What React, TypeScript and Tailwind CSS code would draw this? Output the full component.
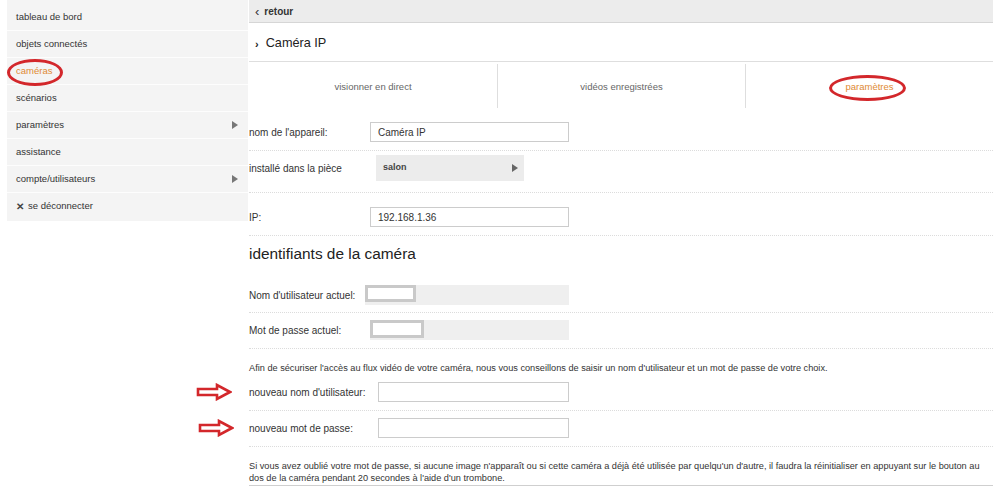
import React from "react";

const menu = [
  { label: "tableau de bord" },
  { label: "objets connectés" },
  { label: "caméras", active: true },
  { label: "scénarios" },
  { label: "paramètres", sub: true },
  { label: "assistance" },
  { label: "compte/utilisateurs", sub: true },
];

const tabs = ["visionner en direct", "vidéos enregistrées", "paramètres"];

// petit triangle plein des entrées de menu
const Caret: React.FC<{ className?: string }> = ({ className }) => (
  <svg width="6" height="8" viewBox="0 0 6 8" className={className}>
    <path d="M0 0 L6 4 L0 8 Z" fill="currentColor" />
  </svg>
);

// flèche rouge d'annotation
const RedArrow: React.FC<{ className?: string }> = ({ className }) => (
  <svg width="36" height="18" viewBox="0 0 36 18" className={className}>
    <path
      d="M2 6 H21 V2 L34 9 L21 16 V12 H2 Z"
      fill="#fff"
      stroke="#d3272b"
      strokeWidth="2.6"
      strokeLinejoin="miter"
    />
  </svg>
);

const Row: React.FC<React.PropsWithChildren<{ className?: string }>> = ({
  children,
  className = "",
}) => (
  <div
    className={`flex items-center border-b border-dotted border-[#dcdcdc] text-[10px] ${className}`}
  >
    {children}
  </div>
);

const App: React.FC = () => {
  return (
    <div
      className="relative flex w-[998px] h-[487px] overflow-hidden bg-white text-[#333]"
      style={{ fontFamily: '"Liberation Sans", Arial, sans-serif' }}
    >
      {/* menu latéral */}
      <div className="ml-[7px] w-[241px] flex-none self-start bg-[#f4f4f4] pt-[4px] pb-[1px] text-[9.5px]">
        {menu.map((item) => (
          <div
            key={item.label}
            className="flex h-[27px] items-center justify-between border-b border-[#fdfdfd] pl-[9px] pr-[10px]"
          >
            <span className={item.active ? "text-[#e08a34]" : ""}>
              {item.label}
            </span>
            {item.sub ? <Caret className="text-[#777]" /> : null}
          </div>
        ))}
        <div className="flex h-[27px] items-center pl-[9px]">
          <span className="mr-[4px] text-[10px] font-bold text-[#444]">✕</span>
          se déconnecter
        </div>
      </div>

      {/* contenu */}
      <div className="ml-[1px] w-[744px] flex-none">
        <div className="flex h-[23px] items-center border-b border-[#d6d6d6] bg-[#ececec] pl-[6px] text-[10px] font-bold text-[#333]">
          <span className="mr-[5px] text-[13px] font-normal leading-none">‹</span>
          retour
        </div>

        <div className="flex h-[39px] items-center border-b border-[#dedede] pl-[6px] pt-[4px] text-[12.7px] text-[#222]">
          <span className="mr-[7px] text-[11px] font-bold">›</span>
          Caméra IP
        </div>

        <div className="grid h-[48px] grid-cols-3 text-[9.5px]">
          {tabs.map((t, i) => (
            <div
              key={t}
              className={`flex items-center justify-center pt-[2px] ${
                i > 0 ? "border-l border-[#dedede] my-[2px]" : ""
              } ${i === 2 ? "text-[#e08a34]" : "text-[#666]"}`}
            >
              {t}
            </div>
          ))}
        </div>

        <Row className="pt-[12px] pb-[8px]">
          <span className="w-[121px]">nom de l'appareil:</span>
          <div className="flex h-[20px] w-[199px] items-center border border-[#cccccc] pl-[7px]">
            Caméra IP
          </div>
        </Row>

        <Row className="pt-[4px] pb-[11px]">
          <span className="w-[127px]">installé dans la pièce</span>
          <div className="flex h-[26px] w-[148px] items-center justify-between bg-[#ececec] pl-[7px] pr-[6px] text-[9px] font-bold text-[#444]">
            salon
            <Caret className="text-[#666]" />
          </div>
        </Row>

        <Row className="pt-[14px] pb-[8px]">
          <span className="w-[121px]">IP:</span>
          <div className="flex h-[20px] w-[199px] items-center border border-[#cccccc] pl-[7px]">
            192.168.1.36
          </div>
        </Row>

        <h2 className="pt-[8px] text-[15.4px] leading-[20px] text-[#222]">
          identifiants de la caméra
        </h2>

        <Row className="pt-[21px] pb-[7px]">
          <span className="w-[116px]">Nom d'utilisateur actuel:</span>
          <div className="h-[20px] w-[204px] bg-[#efefef]">
            <div className="h-[17px] w-[51px] border-[3px] border-[#c9c9c9] bg-white" />
          </div>
        </Row>

        <Row className="pt-[7px] pb-[8px]">
          <span className="w-[121px]">Mot de passe actuel:</span>
          <div className="h-[20px] w-[199px] bg-[#efefef]">
            <div className="h-[18px] w-[54px] border-[3px] border-[#c9c9c9] bg-white" />
          </div>
        </Row>

        <p className="pt-[12px] text-[9.2px] leading-[14px]">
          Afin de sécuriser l'accès au flux vidéo de votre caméra, nous vous
          conseillons de saisir un nom d'utilisateur et un mot de passe de votre
          choix.
        </p>

        <Row className="pt-[7px] pb-[8px]">
          <span className="w-[129px]">nouveau nom d'utilisateur:</span>
          <div className="h-[20px] w-[191px] border border-[#cccccc]" />
        </Row>

        <Row className="pt-[7px] pb-[8px]">
          <span className="w-[129px]">nouveau mot de passe:</span>
          <div className="h-[20px] w-[191px] border border-[#cccccc]" />
        </Row>

        <p className="border-b border-[#cfcfcf] pt-[13px] pb-[1px] text-[9.2px] leading-[12px]">
          <span className="block whitespace-nowrap">
            Si vous avez oublié votre mot de passe, si aucune image n'apparaît
            ou si cette caméra a déjà été utilisée par quelqu'un d'autre, il
            faudra la réinitialiser en appuyant sur le bouton au
          </span>
          dos de la caméra pendant 20 secondes à l'aide d'un trombone.
        </p>
      </div>

      {/* annotations */}
      <div className="absolute left-[7px] top-[59px] h-[27px] w-[56px] rounded-[50%] border-[3px] border-[#d3272b]" />
      <div className="absolute left-[829px] top-[75px] h-[26px] w-[77px] rounded-[50%] border-[3px] border-[#d3272b]" />
      <RedArrow className="absolute left-[196px] top-[383px]" />
      <RedArrow className="absolute left-[198px] top-[419px]" />
    </div>
  );
};

export default App;
